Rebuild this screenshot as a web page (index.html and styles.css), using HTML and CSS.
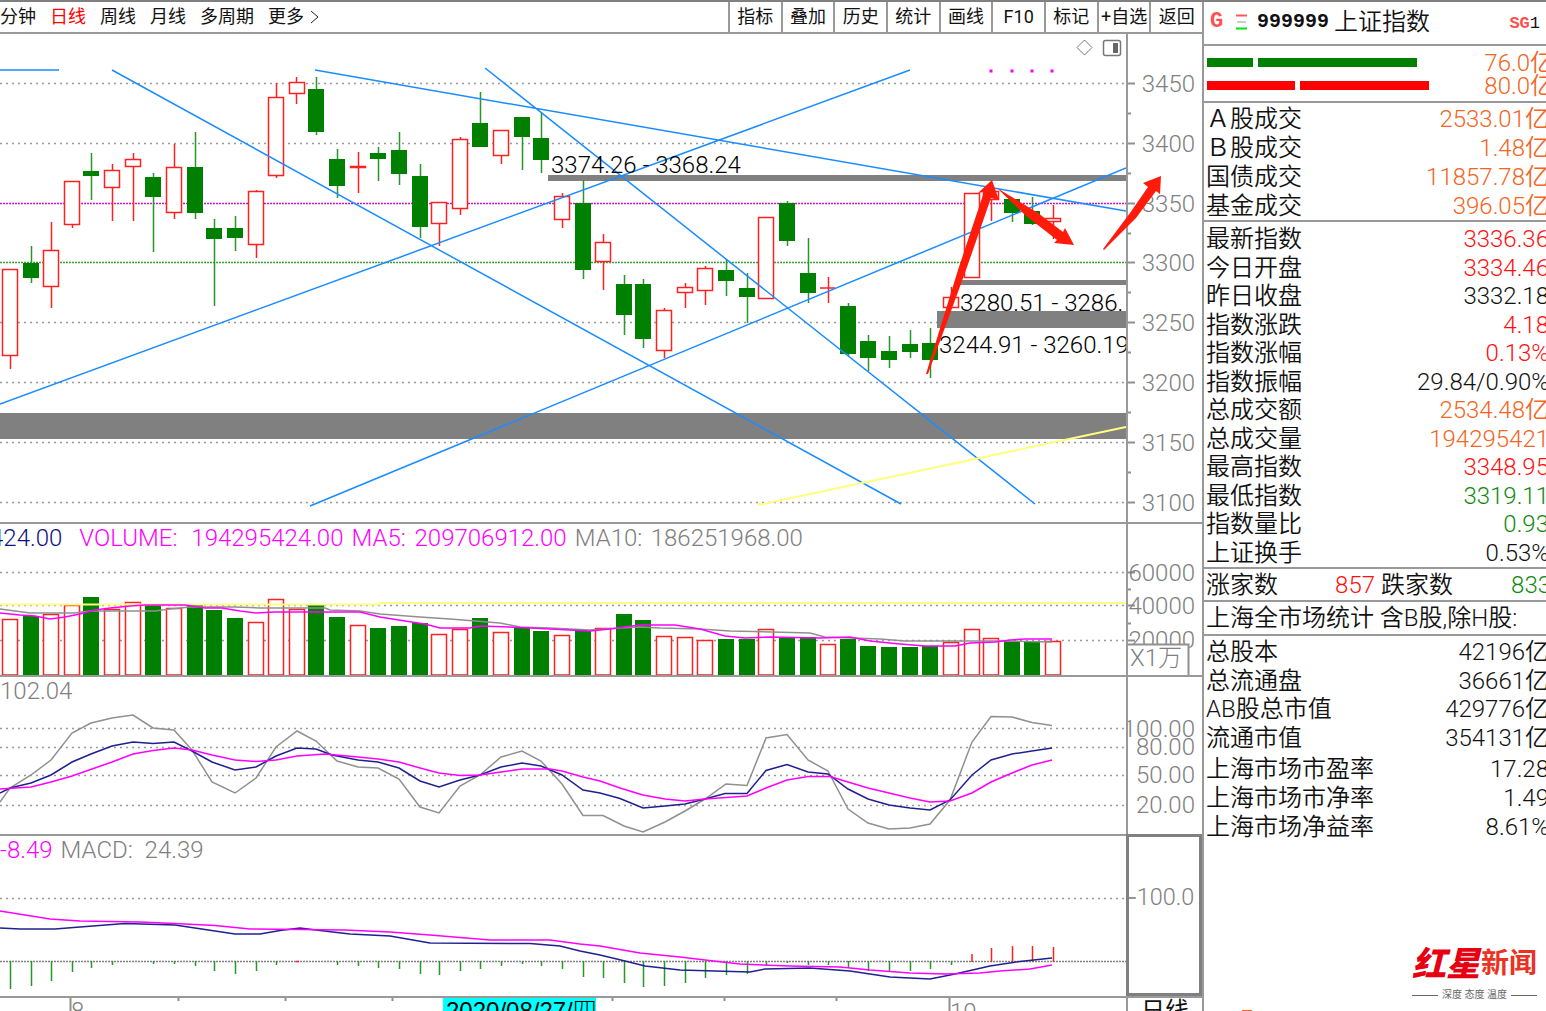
FILE: index.html
```html
<!DOCTYPE html>
<html lang="zh-CN">
<head>
<meta charset="utf-8">
<title>上证指数 999999</title>
<link rel="stylesheet" href="styles.css">
</head>
<body>
<div class="app">
<main class="main">
  <header class="toolbar">
    <nav class="periods" aria-label="周期">
      <button>分钟</button><button class="active">日线</button><button>周线</button><button>月线</button><button>多周期</button><button class="more">更多
        <svg width="10" height="14" viewBox="0 0 10 14"><path d="M1 1L8 7L1 13" fill="none" stroke="#222"/></svg></button>
    </nav>
    <div class="tools">
      <button>指标</button><button>叠加</button><button>历史</button><button>统计</button><button>画线</button><button>F10</button><button>标记</button><button>+自选</button><button>返回</button>
    </div>
  </header>

  <section class="panel price">
    <svg class="plot" viewBox="0 34 1126 488" preserveAspectRatio="xMaxYMin slice">
      <g class="grid">
        <path d="M0 83.5H1126M0 143.5H1126M0 322.5H1126M0 382.5H1126M0 442.5H1126M0 502.5H1126"/>
        <path class="fine magenta" d="M0 203.5H1126"/>
        <path class="fine green" d="M0 262.5H1126"/>
      </g>
      <path class="band" d="M548 175H1126V181H548ZM959 280H1126V285H959ZM937 311H1126V328H937ZM0 413H1126V439H0Z"/>
      <g class="up">
        <path d="M10.500 355V369M51.500 222V308M72.500 225V228M112.500 164V221M133.500 153V221M174.500 144V219M256.500 190V258M276.500 83V178M296.500 77V104M358.500 152V193M439.500 223V246M460.500 137V215M501.500 156V164M562.500 193V228M603.500 234V290M664.500 308V358M685.500 283V308M705.500 266V305M828.500 277V303M951.500 287V307M991.500 199V221M1053.500 205V239"/>
        <path d="M2.500 269.500h15v86h-15zM43.500 250.500h15v36h-15zM64.500 181.500h15v43h-15zM104.500 170.500h15v17h-15zM125.500 159.500h15v7h-15zM166.500 167.500h15v45h-15zM248.500 191.500h15v53h-15zM268.500 97.500h15v78h-15zM289.500 82.500h15v11h-15zM350.500 166.500h15v1h-15zM431.500 202.500h15v21h-15zM452.500 139.500h15v69h-15zM493.500 130.500h15v25h-15zM554.500 196.500h15v23h-15zM595.500 242.500h15v19h-15zM656.500 310.500h15v40h-15zM677.500 287.500h15v5h-15zM697.500 268.500h15v22h-15zM758.500 217.500h15v81h-15zM820 288h15M943.500 297.500h15v10h-15zM964.500 193.500h15v84h-15zM983.500 191.500h15v8h-15zM1045.500 218.500h15v3h-15z"/>
      </g>
      <path class="down-wick" d="M31.500 246V283M91.500 153V200M153.500 173V252M195.500 132V219M214.500 219V306M235.500 216V251M316.500 77V135M337.500 149V198M378.500 147V181M399.500 132V185M420.500 164V238M480.500 92V147M522.500 117V170M541.500 112V173M583.500 180V279M624.500 275V335M643.500 279V348M726.500 259V296M747.500 273V323M787.500 201V246M808.500 238V303M848.500 303V356M868.500 335V371M889.500 336V368M910.500 330V358M930.500 328V378M1012.500 199V222M1032.500 197V225"/>
      <path class="down" d="M23 263h16v15h-16zM83 171h16v5h-16zM145 177h16v20h-16zM187 167h16v46h-16zM206 228h16v11h-16zM227 228h16v10h-16zM308 89h16v43h-16zM329 159h16v27h-16zM370 153h16v6h-16zM391 150h16v24h-16zM412 176h16v51h-16zM472 123h16v24h-16zM514 117h16v20h-16zM533 138h16v22h-16zM575 203h16v67h-16zM616 284h16v31h-16zM635 284h16v55h-16zM718 270h16v11h-16zM739 288h16v9h-16zM779 203h16v38h-16zM800 273h16v20h-16zM840 306h16v48h-16zM860 341h16v17h-16zM881 351h16v9h-16zM902 344h16v8h-16zM922 343h16v17h-16zM1004 199h16v14h-16zM1024 211h16v13h-16z"/>
      <path class="trend" d="M0 70H59M112 70L901 504M315 70L1126 211M485 68L1035 504M0 404L910 70M310 506L1126 168"/>
      <path class="yellow" d="M758 505L1126 427"/>
      <path class="dots" d="M989.500 71h3M1010.500 71h3M1030.500 71h3M1050.500 71h3"/>
      <g class="note"><text x="551" y="173">3374.26 - 3368.24</text><text x="960" y="311">3280.51 - 3286.</text><text x="939" y="353">3244.91 - 3260.19</text></g>
      <g class="mini"><path d="M1084.500 40l7.500 7.500l-7.500 7.500l-7.500-7.500z"/><rect x="1103.500" y="40.500" width="17" height="15" rx="2" stroke-width="1.500"/><path class="solid" d="M1113 43h5v10h-5z"/></g>
    </svg>
    <svg class="axis" viewBox="1127 34 75 488" preserveAspectRatio="xMinYMin slice">
      <path class="ticks" d="M1127 83.500h7M1127 143.500h7M1127 203.500h7M1127 262.500h7M1127 322.500h7M1127 382.500h7M1127 442.500h7M1127 502.500h7M1127 113.500h3M1127 173.500h3M1127 233.500h3M1127 292.500h3M1127 352.500h3M1127 412.500h3M1127 472.500h3"/>
      <g class="scale"><text x="1194" y="92">3450</text><text x="1194" y="152">3400</text><text x="1194" y="212">3350</text><text x="1194" y="271">3300</text><text x="1194" y="331">3250</text><text x="1194" y="391">3200</text><text x="1194" y="451">3150</text><text x="1194" y="511">3100</text></g>
    </svg>
    <svg class="arrows" viewBox="0 34 1202 488" preserveAspectRatio="xMaxYMin slice">
      <path d="M926 374L958 270L984 192L978 193L992 180L999 200L991 198L966 270L928 374ZM997 188L1038 213L1063 232L1065 228L1074 245L1054 243L1057 240L1025 215ZM1103 249L1130 213L1148 187L1143 183L1161 176L1160 194L1156 191L1136 218L1104 250Z"/>
    </svg>
  </section>

  <section class="panel">
    <div class="study">
      <p class="legend clipped"><span class="navy">424.00</span><span class="mag vol"><b class="key-volume">VOLUME:</b>194295424.00</span><span class="mag"><b class="key-ma5">MA5:</b>209706912.00</span><span><b class="key-ma10">MA10:</b>186251968.00</span></p>
      <svg class="plot" viewBox="0 554 1126 121" preserveAspectRatio="xMaxYMin slice">
        <g class="grid"><path d="M0 572.500H1126M0 605.500H1126M0 640.500H1126"/></g>
        <path class="up" d="M2.500 619.500h15V675h-15zM43.500 614.500h15V675h-15zM64.500 605.500h15V675h-15zM104.500 609.500h15V675h-15zM125.500 602.500h15V675h-15zM166.500 608.500h15V675h-15zM248.500 622.500h15V675h-15zM268.500 599.500h15V675h-15zM289.500 609.500h15V675h-15zM350.500 625.500h15V675h-15zM431.500 634.500h15V675h-15zM452.500 629.500h15V675h-15zM493.500 632.500h15V675h-15zM554.500 635.500h15V675h-15zM595.500 628.500h15V675h-15zM656.500 636.500h15V675h-15zM677.500 637.500h15V675h-15zM697.500 640.500h15V675h-15zM758.500 629.500h15V675h-15zM820.500 644.500h15V675h-15zM943.500 642.500h15V675h-15zM964.500 629.500h15V675h-15zM983.500 638.500h15V675h-15zM1045.500 641.500h15V675h-15z"/>
        <path class="down" d="M23 616h16v60h-16zM83 597h16v79h-16zM145 605h16v71h-16zM187 605h16v71h-16zM206 610h16v66h-16zM227 618h16v58h-16zM308 605h16v71h-16zM329 617h16v59h-16zM370 628h16v48h-16zM391 626h16v50h-16zM412 623h16v53h-16zM472 618h16v58h-16zM514 628h16v48h-16zM533 631h16v45h-16zM575 631h16v45h-16zM616 614h16v62h-16zM635 620h16v56h-16zM718 639h16v37h-16zM739 639h16v37h-16zM779 637h16v39h-16zM800 637h16v39h-16zM840 639h16v37h-16zM860 646h16v30h-16zM881 647h16v29h-16zM902 647h16v29h-16zM922 646h16v30h-16zM1004 641h16v35h-16zM1024 642h16v34h-16z"/>
        <path class="yellow" d="M0 604.500H380V603H1126"/>
        <path class="line gray" d="M0 609L15 611L30 613H75L90 611H155L170 609L190 607H235L260 608H325L330 610L360 611L380 614L420 617L450 619L475 621L500 623L520 627L550 628L590 630L620 628L640 627L660 628L700 629L730 631L810 633L825 637L880 639L905 641H1000L1052 642"/>
        <path class="line magenta" d="M0 613L20 615L35 616L50 619L65 617L80 614L95 610L110 608L130 606L145 605H185L205 608H222L240 611L256 613L275 612H325L360 612L380 617L405 621L425 624L440 628H470L480 626L510 627L530 628L550 629L590 631L610 629L640 625H675L700 629L725 636L745 638L770 637L820 638L850 637L870 641L900 644L925 646H955L970 643L995 642L1010 640L1025 639H1052"/>
      </svg>
    </div>
    <svg class="axis" viewBox="1127 524 75 151" preserveAspectRatio="xMinYMin slice">
      <path class="ticks" d="M1127 572.500h7M1127 605.500h7M1127 640.500h7M1127 589.500h3M1127 623.500h3"/>
      <g class="scale"><text x="1194" y="581">60000</text><text x="1194" y="614">40000</text><text x="1194" y="648">20000</text></g>
      <path class="unit" d="M1126 644.500h61.500v32H1126z"/>
      <text class="unit-text" x="1129" y="666">X1万</text>
    </svg>
  </section>

  <section class="panel">
    <div class="study">
      <p class="legend"><span>102.04</span></p>
      <svg class="plot" viewBox="0 707 1126 127" preserveAspectRatio="xMaxYMin slice">
        <g class="grid"><path d="M0 728.500H1126M0 747.500H1126M0 775.500H1126M0 805.500H1126"/></g>
        <path class="line gray" d="M0 802L10 788L31 775L51 760L72 733L91 723L112 718L133 715L153 728L174 730L192 750L212 782L235 793L256 778L276 747L297 731L316 741L337 761L358 767L378 768L399 779L420 807L439 813L460 786L480 775L501 757L522 751L541 761L562 784L583 815.500H603L624 826L643 832L665 822L685 811L705 799L726 784L747 785.500L766 738L787 734.500L808 760L828 771L848 809L868 823L889 829L910 828L930 824L950 800L972 742L991 716.500L1012 717L1032 722.500L1052 725.500"/>
        <path class="line navy" d="M0 793L10 788L31 783L51 775L72 762L91 754L112 746L133 742L153 743.500L174 742L192 751L212 762L235 770L256 767L276 756L297 748L316 749L332 755L358 760L378 762L399 768L420 781L439 787L460 780L480 775L501 767L522 763L541 766L562 775L583 790L600 793L620 798.500L643 808L665 806L685 804L705 799L725 793.500H747L766 770.500L787 764.500L808 772L828 774L848 789L868 799L889 805L910 808L930 810L950 800L972 775L991 760L1012 754L1032 751L1052 748"/>
        <path class="line magenta" d="M0 789L31 787L51 782L72 776L112 762L133 754L153 750.500L174 748L192 750L212 755L235 760L256 761.500L276 760L297 756L325 754L358 757L378 759L399 762L420 768L439 773L460 775.500L480 775L501 772L522 769H550L562 771L583 777L600 781L620 788L643 795L665 799L685 801L705 799L747 796L766 788L787 780L808 776.500H830L848 782L868 788L889 793L910 798L930 802L950 801L972 793L991 782L1012 773L1032 765L1052 760"/>
      </svg>
    </div>
    <svg class="axis" viewBox="1127 677 75 157" preserveAspectRatio="xMinYMin slice">
      <g class="scale"><text x="1194" y="737">100.00</text><text x="1194" y="755">80.00</text><text x="1194" y="783">50.00</text><text x="1194" y="813">20.00</text></g>
    </svg>
  </section>

  <section class="panel">
    <div class="study">
      <p class="legend"><span class="mag">-8.49</span><span><b class="key-macd">MACD:</b>24.39</span></p>
      <svg class="plot" viewBox="0 866 1126 130" preserveAspectRatio="xMaxYMin slice">
        <g class="grid"><path d="M0 898.500H1126"/><path class="fine dark" d="M0 961.500H1126"/></g>
        <path class="down-wick" d="M10.500 961V989M31.500 961V986M51.500 961V981M72.500 961V972M91.500 961V968M112.500 961V965M153.500 961V964M174.500 961V964M195.500 961V966M214.500 961V971M235.500 961V974M256.500 961V971M276.500 961V965M337.500 961V965M358.500 961V966M378.500 961V968M399.500 961V969M420.500 961V974M439.500 961V975M460.500 961V971M480.500 961V969M501.500 961V966M522.500 961V964M541.500 961V966M562.500 961V969M583.500 961V977M603.500 961V978M624.500 961V983M643.500 961V987M664.500 961V986M685.500 961V983M705.500 961V978M726.500 961V975M747.500 961V974M766.500 961V966M787.500 961V963M808.500 961V965M828.500 961V965M848.500 961V968M868.500 961V971M889.500 961V972M910.500 961V971M930.500 961V969M951.500 961V965"/>
        <path class="up" d="M296 961.500h3M972 954V962M991.500 948V962M1012.500 946V962M1032.500 946V962M1053.500 947V962"/>
        <path class="line navy" d="M0 928L20 929H55L80 927L125 923.500L175 925L195 928L235 934H260L280 930.500L300 928L320 930.500L350 934L390 936L430 943L530 943.500L560 946L580 951L600 955L625 961L645 966L680 970L750 972L765 969L810 968L850 971L890 977L930 979L955 974L990 966L1020 961.500L1052 958"/>
        <path class="line magenta" d="M0 911L25 915L50 919L80 921L140 922L185 924L215 925.500L250 929L300 929.500L345 930L390 932L430 935L490 940H550L580 944L600 946L640 953L680 957L705 960L740 964L790 966L840 967L870 970L910 973L945 974L980 973L1000 971L1030 969L1052 965"/>
      </svg>
    </div>
    <svg class="axis boxed" viewBox="1127 836 75 160" preserveAspectRatio="xMinYMin slice">
      <path class="ticks" d="M1127 898.500h7"/>
      <g class="scale"><text x="1194" y="906">100.0</text></g>
    </svg>
  </section>

  <footer class="timeline">
    <svg class="plot" viewBox="0 998 1126 30" preserveAspectRatio="xMaxYMin slice">
      <path class="ticks" d="M70.500 998v30M949.500 998v30M178.500 998v3M285.500 998v3M392.500 998v3M612.500 998v3M724.500 998v3M836.500 998v3"/>
      <path class="cursor" d="M443 998h153v30H443z"/>
      <text class="month" x="71" y="1019">8</text><text class="month" x="950" y="1020">10</text><text class="date" x="446" y="1019">2020/08/27/四</text>
    </svg>
    <span class="period">日线</span>
  </footer>
</main>

<aside class="quote">
  <h1 class="title"><span class="tag">G</span>
    <svg width="12" height="16" viewBox="0 0 12 16"><path d="M0 1.500h11" stroke="#ff5a5a" stroke-width="2"/><path d="M1 8h9" stroke="#ccc" stroke-width="2"/><path d="M0 14.500h11" stroke="#00e010" stroke-width="2"/></svg>
    <span class="code">999999</span><span class="name">上证指数</span><span class="sg"><b>SG</b>1</span></h1>
  <div class="flows">
    <div class="flow sell"><i style="width:46px"></i><i style="width:159px"></i><span>76.0亿</span></div>
    <div class="flow buy"><i style="width:88px"></i><i style="width:129px"></i><span>80.0亿</span></div>
  </div>
  <div class="block"><table class="turnover">
    <tr><th>&#xFF21;股成交</th><td class="or">2533.01亿</td></tr>
    <tr><th>&#xFF22;股成交</th><td class="or">1.48亿</td></tr>
    <tr><th>国债成交</th><td class="or">11857.78亿</td></tr>
    <tr><th>基金成交</th><td class="or">396.05亿</td></tr>
  </table></div>
  <div class="block"><table class="index">
    <tr><th>最新指数</th><td class="rd">3336.36</td></tr>
    <tr><th>今日开盘</th><td class="rd">3334.46</td></tr>
    <tr><th>昨日收盘</th><td>3332.18</td></tr>
    <tr><th>指数涨跌</th><td class="rd">4.18</td></tr>
    <tr><th>指数涨幅</th><td class="rd">0.13%</td></tr>
    <tr><th>指数振幅</th><td>29.84/0.90%</td></tr>
    <tr><th>总成交额</th><td class="or">2534.48亿</td></tr>
    <tr><th>总成交量</th><td class="or">194295421</td></tr>
    <tr><th>最高指数</th><td class="rd">3348.95</td></tr>
    <tr><th>最低指数</th><td class="gr">3319.11</td></tr>
    <tr><th>指数量比</th><td class="gr">0.93</td></tr>
    <tr><th>上证换手</th><td>0.53%</td></tr>
  </table></div>
  <div class="breadth"><span>涨家数</span><span class="rd num">857</span><span>跌家数</span><span class="gr num">833</span></div>
  <h2 class="market">上海全市场统计 含B股,除H股:</h2>
  <table class="caps">
    <tr><th>总股本</th><td>42196亿</td></tr>
    <tr><th>总流通盘</th><td>36661亿</td></tr>
    <tr><th>AB股总市值</th><td>429776亿</td></tr>
    <tr><th>流通市值</th><td>354131亿</td></tr>
  </table>
  <table class="ratios">
    <tr><th>上海市场市盈率</th><td>17.28</td></tr>
    <tr><th>上海市场市净率</th><td>1.49</td></tr>
    <tr><th>上海市场净益率</th><td>8.61%</td></tr>
  </table>
  <div class="brand">
    <p class="wordmark"><em>红星</em><b>新闻</b></p>
    <p class="motto">深度 态度 温度</p>
  </div>
  <i class="speck"></i>
</aside>
</div>
</body>
</html>
```
FILE: styles.css
```css
* { box-sizing: border-box; }
body { margin: 0; background: #fff; color: #111; font: 300 24px/28px Roboto, "Noto Sans CJK SC", sans-serif; }
p, h1, h2 { margin: 0; font-weight: 300; font-size: 24px; }
button { border: 0; padding: 0; background: none; color: #111; font: 400 18px/30px Roboto, "Noto Sans CJK SC", sans-serif; white-space: nowrap; }

.app { display: flex; height: 100vh; overflow: hidden; border-top: 2px solid #808080; }
.main { flex: 1; min-width: 0; display: flex; flex-direction: column; }
svg { display: block; flex: none; }

.toolbar { display: flex; justify-content: space-between; height: 32px; border-bottom: 2px solid #999; flex: none; }
.periods { display: flex; gap: 14px; }
.periods .active { color: red; }
.more { display: flex; align-items: center; gap: 6px; }
.tools { display: flex; width: 474px; }
.tools button { flex: 1 1 0; min-width: 0; border-left: 2px solid #999; }

.panel { display: flex; border-bottom: 2px solid #999; position: relative; flex: none; }
.study { flex: 1; min-width: 0; display: flex; flex-direction: column; }
.plot { flex: 1; min-width: 0; width: 100%; overflow: hidden; }
.price .plot { height: 488px; }
.axis { width: 76px; border-left: 2px solid #999; overflow: hidden; }
.boxed { border: 3px solid #808080; margin-top: -2px; }
.arrows { position: absolute; inset: 0; width: 100%; height: 488px; pointer-events: none; fill: #ff1a0a; }
.legend { display: flex; gap: 8px; height: 30px; color: #808080; white-space: nowrap; overflow: hidden; }
.legend b { display: inline-block; font-weight: inherit; }
.key-volume { width: 112px; }
.key-ma5 { width: 63px; }
.key-ma10 { width: 76px; }
.key-macd { width: 84px; }
.clipped { text-indent: -10px; }
.legend .vol { margin-left: 9px; }
.legend span + span { text-indent: 0; }
.legend .navy { color: #101080; }
.legend .mag { color: #f0f; }

.grid path { fill: none; stroke: #999; stroke-width: 1.5; stroke-dasharray: 2 4; }
.grid .fine { stroke-dasharray: 2 1; }
.grid .magenta { stroke: #c818c8; }
.grid .green { stroke: #3aa03a; }
.grid .dark { stroke: #808080; }
.band { fill: #808080; }
.up { fill: #fff; stroke: #ff2020; stroke-width: 1.5; }
.down { fill: #008000; }
.down-wick { fill: none; stroke: #2a962a; stroke-width: 1.5; }
.trend { fill: none; stroke: #1a8cff; stroke-width: 1.5; }
.yellow { fill: none; stroke: #ffff80; stroke-width: 2; }
.dots { stroke: #f0f; stroke-width: 3; }
.mini { fill: none; stroke: #777; }
.mini .solid { fill: #666; stroke: none; }
.line { fill: none; stroke-width: 1.5; }
.line.gray { stroke: #909090; }
.line.magenta { stroke: #f0f; }
.line.navy { stroke: #202090; }
.ticks { fill: none; stroke: #909090; stroke-width: 2; }
.scale { fill: #808080; text-anchor: end; }
.unit { fill: #fff; stroke: #909090; stroke-width: 2; }
.unit-text, .month { fill: #808080; }
.cursor { fill: #0ff; }
.date { font-family: "Liberation Sans", "Noto Sans CJK SC", sans-serif; }

.timeline { display: flex; height: 30px; overflow: hidden; flex: none; }
.timeline .plot { height: 30px; }
.period { width: 76px; border-left: 2px solid #999; padding-left: 13px; line-height: 26px; font-weight: 400; }

.quote { width: 344px; flex: none; border-left: 2px solid #999; display: flex; flex-direction: column; overflow: hidden; white-space: nowrap; font-weight: 350; }
.title { display: flex; align-items: center; height: 44px; padding: 0 6px 2px; border-bottom: 2px solid #999; font-weight: inherit; }
.tag { width: 26px; color: #ff5050; font: 700 22px/28px "Liberation Mono", monospace; }
.code { margin-left: 9px; font: 700 20px/28px "Liberation Mono", monospace; }
.name { margin-left: 5px; }
.sg { margin-left: auto; padding-top: 4px; font: 400 17px/28px "Liberation Mono", monospace; }
.sg b { color: #ff5050; }
.flows { height: 57px; padding: 5px 0 0 3px; border-bottom: 2px solid #999; overflow: hidden; }
.flow { display: flex; gap: 5px; height: 23px; align-items: center; margin-right: -8px; color: #f26522; }
.flow i { height: 9px; }
.flow span { margin-left: auto; }
.sell i { background: #008000; }
.buy i { background: red; }
.block { border-bottom: 2px solid #999; }
table { width: calc(100% + 3px); border-spacing: 0; flex: none; }
th { padding: 0 0 0 2px; text-align: left; font-weight: inherit; }
td { padding: 0; text-align: right; }
.turnover { height: 116px; margin-top: 1px; }
.index { height: 342px; margin-top: 3px; }
.caps { height: 114px; margin-top: 2px; }
.ratios { height: 86px; margin-top: 3px; }
.or { color: #f26522; }
.rd { color: #ff1010; }
.gr { color: #108a10; }
.breadth { display: grid; grid-template-columns: 72px 97px 77px 99px; height: 33px; align-items: center; padding-left: 2px; border-bottom: 2px solid #999; flex: none; }
.breadth span:nth-child(3) { padding-left: 6px; }
.num { text-align: right; }
.market { height: 34px; padding: 0 2px; line-height: 32px; font-weight: inherit; border-bottom: 2px solid #999; flex: none; }
.brand { margin-top: auto; align-self: flex-end; width: 125px; margin-right: 9px; }
.wordmark { display: flex; align-items: center; justify-content: space-between; color: #e60012; line-height: 50px; }
.wordmark em { font-size: 34px; font-weight: 900; }
.wordmark b { font-size: 28px; font-weight: 700; color: #ea3323; }
.motto { display: flex; align-items: center; gap: 4px; font-size: 10px; font-weight: 400; line-height: 12px; color: #666; }
.motto::before, .motto::after { content: ""; flex: 1; height: 1px; background: #666; }
.speck { width: 10px; height: 1px; margin: 9px 0 0 38px; background: #f26522; }
```
